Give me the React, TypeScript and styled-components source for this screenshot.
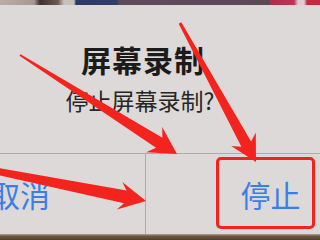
import React from "react";
import styled, { createGlobalStyle } from "styled-components";

const GlobalStyle = createGlobalStyle`
	html, body {
		margin: 0;
		padding: 0;
		background: #dcd9d8;
	}
	body {
		font-family: "Noto Sans CJK SC", "Noto Sans", sans-serif;
	}
`;

const Screen = styled.div`
	position: relative;
	width: 320px;
	height: 240px;
	overflow: hidden;
	display: flex;
	flex-direction: column;
	background: #dcd9d8;
`;

const TopStrip = styled.div`
	height: 5px;
	flex-shrink: 0;
	background: linear-gradient(
		to right,
		#b8aea6 0px,
		#a59a90 34px,
		#3b3130 40px,
		#6a5a50 58px,
		#c9c3bf 64px,
		#c6c0bc 74px,
		#2d3a66 76px,
		#2f3d68 116px,
		#5e4c58 120px,
		#5a4a55 268px,
		#b12d4c 272px,
		#b83553 294px,
		#d8cfd0 298px,
		#d8cfd0 304px,
		#c42a42 307px,
		#c42a42 320px
	);
`;

const Dialog = styled.div`
	flex: 1;
	width: 500px;
	margin-left: -105px;
	display: flex;
	flex-direction: column;
	background: #dcd9d8;
`;

const Body = styled.div`
	height: 148px;
	box-sizing: border-box;
	padding: 36px 4px 0 0;
	text-align: center;
`;

const Title = styled.div`
	font-size: 30px;
	line-height: 36px;
	font-weight: 700;
	letter-spacing: 1px;
	color: #1b1b1b;
`;

const Message = styled.div`
	margin-top: 10px;
	padding-right: 6px;
	font-size: 23px;
	line-height: 27px;
	color: #262626;
`;

const Actions = styled.div`
	height: 80px;
	display: grid;
	grid-template-columns: 1fr 1fr;
	border-top: 1px solid #aeaaa8;
`;

const ActionButton = styled.div<{ $divider?: boolean }>`
	display: flex;
	align-items: center;
	justify-content: center;
	font-size: 30px;
	color: #3a7ee6;
	border-left: ${(p) => (p.$divider ? "1px solid #aeaaa8" : "none")};
`;

const BottomStrip = styled.div`
	height: 6px;
	flex-shrink: 0;
	background: linear-gradient(to bottom, #b7a792 0px, #6f5a42 2px, #4f3d2a 6px);
`;

const Highlight = styled.div`
	position: absolute;
	left: 216px;
	top: 157px;
	width: 99px;
	height: 72px;
	box-sizing: border-box;
	border: 3px solid #f2221c;
	border-radius: 5px;
`;

const Overlay = styled.svg`
	position: absolute;
	left: 0;
	top: 0;
	pointer-events: none;
`;

type Pt = [number, number];

interface IArrow {
	tail: Pt;
	tip: Pt;
	head: number;
	half: number;
	neck: number;
	start: number;
}

const arrows: IArrow[] = [
	{ tail: [20, 55], tip: [177, 154], head: 27, half: 15, neck: 6, start: 1 },
	{ tail: [180, 23], tip: [256, 162], head: 26, half: 14, neck: 5.5, start: 1.5 },
	{ tail: [-4, 171], tip: [146, 201], head: 27, half: 14, neck: 6.5, start: 3.5 },
];

function arrowPoints({ tail, tip, head, half, neck, start }: IArrow) {
	const dx = tip[0] - tail[0];
	const dy = tip[1] - tail[1];
	const len = Math.hypot(dx, dy);
	const ux = dx / len;
	const uy = dy / len;
	const nx = -uy;
	const ny = ux;
	const at = (d: number, w: number): string => {
		const x = tip[0] - ux * d + nx * w;
		const y = tip[1] - uy * d + ny * w;
		return `${x.toFixed(1)},${y.toFixed(1)}`;
	};
	// barbs swept back a little behind the neck
	return [
		at(len, start),
		at(head * 0.78, neck),
		at(head, half),
		at(0, 0),
		at(head, -half),
		at(head * 0.78, -neck),
		at(len, -start),
	].join(" ");
}

const App = () => {
	return (
		<Screen>
			<GlobalStyle />
			<TopStrip />
			<Dialog>
				<Body>
					<Title>屏幕录制</Title>
					<Message>停止屏幕录制?</Message>
				</Body>
				<Actions>
					<ActionButton>取消</ActionButton>
					<ActionButton $divider>停止</ActionButton>
				</Actions>
			</Dialog>
			<BottomStrip />
			<Highlight />
			<Overlay width={320} height={240} viewBox="0 0 320 240">
				{arrows.map((a, i) => (
					<polygon key={i} points={arrowPoints(a)} fill="#f3241d" />
				))}
			</Overlay>
		</Screen>
	);
};

export default App;
